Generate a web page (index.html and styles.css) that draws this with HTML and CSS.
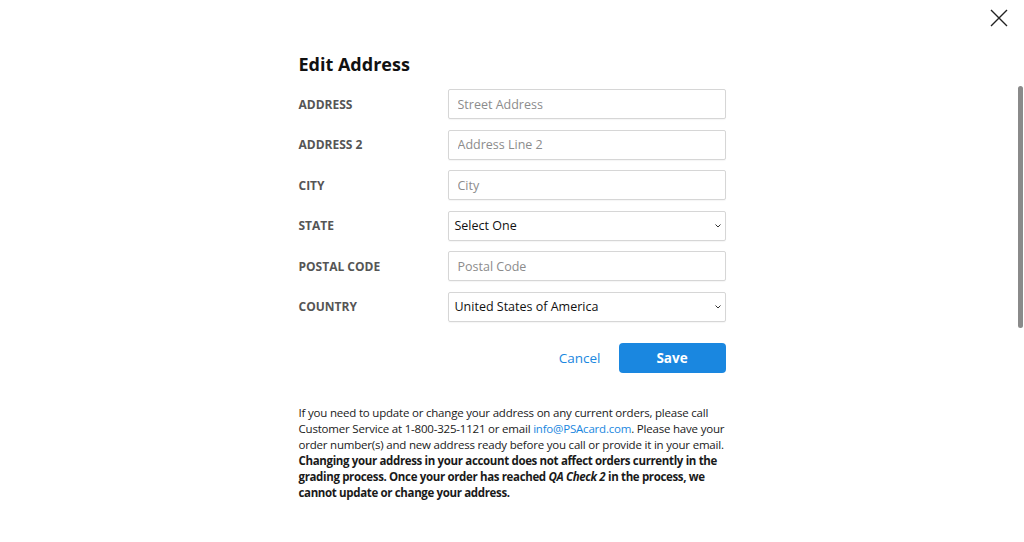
FILE: index.html
```html
<!DOCTYPE html>
<html lang="en">
<head>
    <meta charset="UTF-8">
    <meta name="viewport" content="width=device-width, initial-scale=1.0">
    <title>Edit Address</title>
    <link rel="stylesheet" href="styles.css">
</head>
<body>
    <button class="close-btn" aria-label="Close">
        <svg width="18" height="18" viewBox="0 0 18 18">
            <path d="M1 1 L17 17 M17 1 L1 17" stroke="#222" stroke-width="1.4" fill="none"/>
        </svg>
    </button>
    <div class="scroll-thumb"></div>

    <main class="modal">
        <h1>Edit Address</h1>
        <form class="address-form">
            <div class="row">
                <label for="addr1">ADDRESS</label>
                <input id="addr1" type="text" placeholder="Street Address">
            </div>
            <div class="row">
                <label for="addr2">ADDRESS 2</label>
                <input id="addr2" type="text" placeholder="Address Line 2">
            </div>
            <div class="row">
                <label for="city">CITY</label>
                <input id="city" type="text" placeholder="City">
            </div>
            <div class="row">
                <label for="state">STATE</label>
                <div class="select">
                    <span>Select One</span>
                    <svg width="6" height="4" viewBox="0 0 6 4"><path d="M0.5 0.5 L3 3 L5.5 0.5" stroke="#333" stroke-width="1" fill="none"/></svg>
                </div>
            </div>
            <div class="row">
                <label for="zip">POSTAL CODE</label>
                <input id="zip" type="text" placeholder="Postal Code">
            </div>
            <div class="row">
                <label for="country">COUNTRY</label>
                <div class="select">
                    <span>United States of America</span>
                    <svg width="6" height="4" viewBox="0 0 6 4"><path d="M0.5 0.5 L3 3 L5.5 0.5" stroke="#333" stroke-width="1" fill="none"/></svg>
                </div>
            </div>
            <div class="actions">
                <a href="#" class="cancel">Cancel</a>
                <button type="button" class="save">Save</button>
            </div>
        </form>

        <p class="note">
            If you need to update or change your address on any current orders, please call
            Customer Service at 1-800-325-1121 or email <a href="#">info@PSAcard.com</a>. Please have your
            order number(s) and new address ready before you call or provide it in your email.
            <strong>Changing your address in your account does not affect orders currently in the
            grading process. Once your order has reached <em>QA Check 2</em> in the process, we
            cannot update or change your address.</strong>
        </p>
    </main>
</body>
</html>
```

FILE: styles.css
```css
body {
    margin: 0;
    background: #fff;
    font-family: "Open Sans", sans-serif;
    color: #1a1a1a;
    height: 542px;
    overflow: hidden;
}

.close-btn {
    position: absolute;
    top: 9px;
    left: 990px;
    border: none;
    background: none;
    padding: 0;
    cursor: pointer;
}

.scroll-thumb {
    position: absolute;
    left: 1018px;
    top: 86px;
    width: 5px;
    height: 242px;
    border-radius: 3px;
    background: #8a8a8a;
}

.modal {
    width: 427px;
    margin: 0 auto;
    padding-top: 52px;
}

.modal h1 {
    font-size: 18px;
    font-weight: bold;
    margin: 0 0 13px;
    color: #111;
}

.address-form {
    display: flex;
    flex-direction: column;
    gap: 10.6px;
}

.row {
    display: flex;
    align-items: center;
}

.row label {
    width: 149px;
    font-size: 12px;
    font-weight: bold;
    color: #555;
}

.row input,
.select {
    flex: 1;
    box-sizing: border-box;
    height: 30px;
    border: 1px solid #d6d6d6;
    border-radius: 2px;
    padding: 0 9px;
    font-family: inherit;
    font-size: 12.5px;
    color: #222;
    box-shadow: 0 1px 1px rgba(0,0,0,0.04);
}

.row input::placeholder {
    color: #8c8c8c;
}

.select {
    display: flex;
    align-items: center;
    justify-content: space-between;
    padding: 0 4px 0 6px;
    color: #111;
}

.actions {
    display: flex;
    justify-content: flex-end;
    align-items: center;
    gap: 18px;
    margin-top: 10px;
}

.cancel {
    color: #1a87e0;
    text-decoration: none;
    font-size: 13.5px;
}

.save {
    width: 107px;
    height: 30px;
    border: none;
    border-radius: 4px;
    background: #1a87e0;
    color: #fff;
    font-family: inherit;
    font-size: 13.5px;
    font-weight: bold;
    cursor: pointer;
}

.note {
    margin: 32px 0 0;
    font-size: 11.5px;
    letter-spacing: -0.2px;
    line-height: 16px;
    color: #1a1a1a;
}

.note strong {
    letter-spacing: -0.35px;
}

.note a {
    color: #1a87e0;
    text-decoration: none;
}
```
